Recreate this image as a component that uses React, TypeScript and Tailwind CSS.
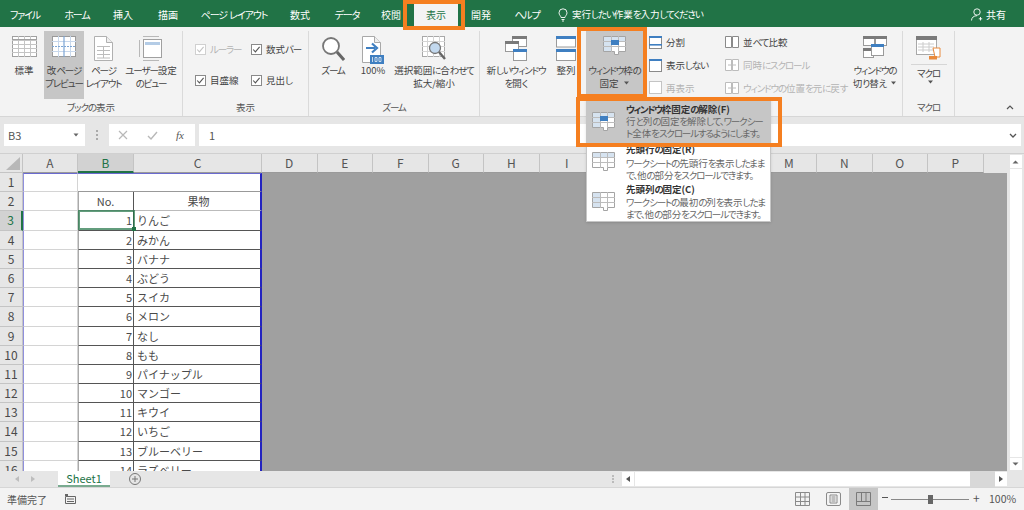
import * as React from "react"

type BtnProps = {
  w: number
  label: string[]
  icon: React.ReactNode
  active?: boolean
  caret?: boolean
}

// Kana are set narrow in the ribbon font, kanji stay full width
const Kana = ({ text, tight }: { text: string; tight?: boolean }) => (
  <>
    {text.split(/([\u3000-\u30ff]+)/).map((part, i) =>
      i % 2 === 1 ? (
        <span key={i} className={tight ? "tracking-[-1.4px]" : "tracking-[-1.1px]"}>
          {part}
        </span>
      ) : (
        part
      )
    )}
  </>
)

const Caret = () => (
  <svg width="7" height="4" viewBox="0 0 7 4" className="inline-block ml-[4px] mb-[2px]">
    <path d="M1 0.5h5L3.5 3.5z" fill="#555" />
  </svg>
)

// Ribbon icons
const GridIcon = () => (
  <svg width="25" height="21" viewBox="0 0 25 21">
    <rect x="0.5" y="0.5" width="24" height="20" fill="#fff" stroke="#a0a0a0" />
    <path d="M0 4.5h25M0 8.5h25M0 12.5h25M0 16.5h25M6.5 0v21M12.5 0v21M18.5 0v21" stroke="#c4c4c4" />
    <path d="M0 3.5h25" stroke="#a0a0a0" />
  </svg>
)

const BreakIcon = () => (
  <svg width="24" height="21" viewBox="0 0 24 21">
    <rect x="0.5" y="0.5" width="23" height="20" fill="#fff" stroke="#9a9a9a" />
    <path d="M0 5.5h24M0 15.5h24M6.5 0v21M18.5 0v21" stroke="#c8d8ec" />
    <path d="M12 0v21" stroke="#7ea6d4" strokeWidth="1.2" />
    <path d="M0 10.5h24" stroke="#7ea6d4" strokeDasharray="2 1" />
  </svg>
)

const PageIcon = () => (
  <svg width="19" height="25" viewBox="0 0 19 25">
    <path d="M0.5 0.5h12l6 6v18h-18z" fill="#fff" stroke="#b0b0b0" />
    <path d="M12.5 0.5v6h6" fill="#eee" stroke="#b0b0b0" />
    <path d="M3 10.5h13M3 14.5h13M3 18.5h13M3 22h13M9.5 10v12" stroke="#bcbcbc" />
  </svg>
)

const CustomViewIcon = () => (
  <svg width="24" height="25" viewBox="0 0 24 25">
    <path d="M0.5 4v17M4 0.5h16M4 24.5h16" stroke="#b8b8b8" />
    <rect x="4.5" y="3.5" width="18" height="18" fill="#fff" stroke="#a0a0a0" />
    <rect x="6" y="6" width="15" height="3" fill="#b4cce6" />
  </svg>
)

const MagnifierIcon = () => (
  <svg width="24" height="27" viewBox="0 0 24 27">
    <circle cx="10" cy="10" r="8" fill="#fff" stroke="#777" strokeWidth="1.8" />
    <path d="M16 16l7 8" stroke="#666" strokeWidth="3" />
  </svg>
)

const HundredIcon = () => (
  <svg width="22" height="28" viewBox="0 0 22 28">
    <path d="M0.5 0.5h12l6 6v20h-18z" fill="#fff" stroke="#a8a8a8" />
    <path d="M12.5 0.5v6h6" fill="#eee" stroke="#a8a8a8" />
    <path d="M4 12h9M10 7.5l5 4.5-5 4.5" fill="none" stroke="#3f7fc1" strokeWidth="2.2" />
    <rect x="8" y="19" width="14" height="9" fill="#3f7fc1" />
    <path d="M10.5 21v5M13 21.5h2v4h-2zM17 21.5h2v4h-2z" fill="none" stroke="#fff" strokeWidth="0.7" />
  </svg>
)

const ZoomSelIcon = () => (
  <svg width="25" height="25" viewBox="0 0 25 25">
    <rect x="0.5" y="0.5" width="22" height="20" fill="#fff" stroke="#a8a8a8" />
    <path d="M0 5.5h23M0 10.5h23M0 15.5h23M5.5 0v21M11.5 0v21M17.5 0v21" stroke="#d4d4d4" />
    <circle cx="13" cy="12" r="5.5" fill="#c2d8ee" stroke="#777" strokeWidth="1.3" />
    <path d="M17 16l6 7" stroke="#666" strokeWidth="2.4" />
  </svg>
)

const NewWinIcon = () => (
  <svg width="22" height="25" viewBox="0 0 22 25">
    <rect x="7.5" y="0.5" width="14" height="10" fill="#fff" stroke="#9a9a9a" />
    <rect x="7" y="0" width="15" height="3" fill="#7a7a7a" />
    <rect x="0.5" y="5.5" width="13" height="10" fill="#fff" stroke="#9a9a9a" />
    <rect x="0" y="5" width="14" height="3" fill="#7a7a7a" />
    <rect x="8.5" y="13.5" width="13" height="11" fill="#fff" stroke="#9a9a9a" />
    <rect x="8" y="13" width="14" height="3" fill="#3f7fc1" />
  </svg>
)

const ArrangeIcon = () => (
  <svg width="20" height="25" viewBox="0 0 20 25">
    <rect x="0.5" y="0.5" width="19" height="10.5" fill="#fff" stroke="#9a9a9a" />
    <rect x="0" y="0" width="20" height="3" fill="#3f7fc1" />
    <rect x="0.5" y="13.5" width="19" height="11" fill="#fff" stroke="#9a9a9a" />
    <rect x="0" y="13" width="20" height="3" fill="#3f7fc1" />
  </svg>
)

const FreezeIcon = ({ hatch = "all" }: { hatch?: "all" | "top" | "left" }) => (
  <svg width="23" height="20" viewBox="0 0 23 20">
    <path d="M0.5 0.5h22v15h-7v3h-4v-3h-11z" fill="#fff" stroke="#a4a4a4" />
    {hatch !== "left" && <rect x="1" y="1" width="21" height="4" fill="#d6e3f0" />}
    {hatch !== "top" && <rect x="1" y="1" width="7" height="14" fill="#d6e3f0" />}
    <path d="M0 5.5h23M0 10.5h23M8.5 0v16M15.5 0v16" stroke="#bcbcbc" />
    {hatch === "all" && <rect x="8" y="4" width="8" height="5" fill="#3f7fc1" />}
  </svg>
)

const SwitchIcon = () => (
  <svg width="24" height="25" viewBox="0 0 24 25">
    <rect x="0.5" y="0.5" width="11" height="9" fill="#fff" stroke="#9a9a9a" />
    <rect x="0" y="0" width="12" height="3" fill="#7a7a7a" />
    <rect x="12.5" y="0.5" width="11" height="9" fill="#fff" stroke="#9a9a9a" />
    <rect x="12" y="0" width="12" height="3" fill="#7a7a7a" />
    <rect x="0.5" y="12.5" width="10" height="9" fill="#fff" stroke="#9a9a9a" />
    <rect x="0" y="12" width="11" height="3" fill="#7a7a7a" />
    <rect x="8.5" y="8.5" width="12" height="11" fill="#fff" stroke="#9a9a9a" />
    <rect x="8" y="8" width="13" height="3" fill="#3f7fc1" />
  </svg>
)

const MacroIcon = () => (
  <svg width="25" height="24" viewBox="0 0 25 24">
    <rect x="0.5" y="0.5" width="20" height="18" fill="#fff" stroke="#a8a8a8" />
    <rect x="0" y="0" width="21" height="4" fill="#7a7a7a" />
    <path d="M2 8h16M2 11h16M2 14h16M7 6v10M13 6v10" stroke="#cccccc" />
    <path d="M17 12h7v9h-5z" fill="#fff" stroke="#e98a3c" />
    <rect x="13" y="20" width="8" height="3.5" fill="#e98a3c" />
  </svg>
)

const SplitIcon = ({ two, muted }: { two?: boolean; muted?: boolean }) => (
  <svg width="13" height="13" viewBox="0 0 13 13">
    <rect x="0.5" y="0.5" width="12" height="12" fill="#fff" stroke={muted ? "#c4c4c4" : "#8a8a8a"} />
    {!muted && <rect x="0" y="0" width="13" height="2" fill="#3f7fc1" />}
    {two && <rect x="0" y="8" width="13" height="1.6" fill="#3f7fc1" />}
  </svg>
)

const CompareIcon = ({ muted }: { muted?: boolean }) => (
  <svg width="14" height="12" viewBox="0 0 14 12">
    <path d="M0.5 0.5h6v11h-6zM7.5 0.5h6v11h-6z" fill="#fff" stroke={muted ? "#bcbcbc" : "#8a8a8a"} />
    {muted && <path d="M3 6h8" stroke="#bcbcbc" />}
  </svg>
)

const Check = ({ disabled }: { disabled?: boolean }) => (
  <svg width="11" height="11" viewBox="0 0 11 11" className="shrink-0">
    <rect x="0.5" y="0.5" width="10" height="10" fill="#fff" stroke={disabled ? "#d0d0d0" : "#8a8a8a"} />
    <path d="M2.2 5.5l2.2 2.4 4.2-5" fill="none" stroke={disabled ? "#c4c4c4" : "#555"} strokeWidth="1.1" />
  </svg>
)

const RibbonButton = ({ w, label, icon, active, caret }: BtnProps) => (
  <div
    style={{ width: w }}
    className={`flex flex-col items-center pt-[5px] h-[68px] shrink-0 ${active ? "bg-[#c6c6c6]" : ""}`}
  >
    <div className="h-[28px] flex items-start justify-center">{icon}</div>
    {label.map((line, i) => (
      <div key={i} className="h-[13px] leading-[13px] whitespace-nowrap">
        <Kana text={line} />
        {caret && i === label.length - 1 && <Caret />}
      </div>
    ))}
  </div>
)

const Group = ({ w, title, children }: { w: number; title: string; children: React.ReactNode }) => (
  <div style={{ width: w }} className="shrink-0 relative flex flex-col border-r border-[#dadada]">
    <div className="h-[68px] flex">{children}</div>
    <div className="h-[16px] leading-[16px] text-center text-[#555]">
      <Kana text={title} />
    </div>
  </div>
)

const SmallItem = ({ icon, text, muted }: { icon: React.ReactNode; text: string; muted?: boolean }) => (
  <div className={`h-[23px] flex items-center gap-[4px] whitespace-nowrap ${muted ? "text-[#b4b4b4]" : ""}`}>
    {icon}
    <span>
      <Kana text={text} />
    </span>
  </div>
)

const CheckItem = ({ text, disabled, w }: { text: string; disabled?: boolean; w: number }) => (
  <div style={{ width: w }} className={`h-[20px] flex items-center gap-[4px] whitespace-nowrap ${disabled ? "text-[#b4b4b4]" : ""}`}>
    <Check disabled={disabled} />
    <span>
      <Kana text={text} />
    </span>
  </div>
)

const tabs: { label: string; w: number; active?: boolean }[] = [
  { label: "ファイル", w: 50 },
  { label: "ホーム", w: 54 },
  { label: "挿入", w: 38 },
  { label: "描画", w: 52 },
  { label: "ページ レイアウト", w: 80 },
  { label: "数式", w: 52 },
  { label: "データ", w: 42 },
  { label: "校閲", w: 46 },
  { label: "表示", w: 44, active: true },
  { label: "開発", w: 46 },
  { label: "ヘルプ", w: 46 },
]

const TabBar = () => (
  <div className="h-[27px] bg-[#217346] flex items-end text-white shrink-0 text-[10px]">
    {tabs.map((t) => (
      <div
        key={t.label}
        style={{ width: t.w }}
        className={`text-center whitespace-nowrap h-[23px] leading-[21px] ${t.active ? "bg-[#f3f3f3] text-[#217346]" : ""}`}
      >
        <Kana text={t.label} />
      </div>
    ))}
    <div className="h-[23px] ml-[8px] flex items-center gap-[4px] pb-[2px] text-[9.5px]">
      <svg width="10" height="14" viewBox="0 0 10 14" fill="none" stroke="#fff" strokeWidth="0.9">
        <path d="M3 9.5C3 8 1 7 1 4.8a4 4 0 018 0C9 7 7 8 7 9.5zM3.5 11.5h3M4 13h2" />
      </svg>
      <span className="whitespace-nowrap">
        <Kana text="実行したい作業を入力してください" />
      </span>
    </div>
    <div className="flex-1" />
    <div className="h-[23px] flex items-center gap-[3px] pb-[2px] mr-[18px]">
      <svg width="12" height="13" viewBox="0 0 12 13" fill="none" stroke="#fff" strokeWidth="0.9">
        <circle cx="6" cy="4" r="3.2" />
        <path d="M0.5 12.5c0-3 2.4-4.8 5.5-4.8M9.5 9v3.5M7.8 10.8h3.4" />
      </svg>
      <span>共有</span>
    </div>
  </div>
)

const Ribbon = () => (
  <div className="h-[90px] bg-[#f3f3f3] border-b border-[#d6d6d6] shrink-0 flex pt-[4px] text-[#444] text-[9.5px]">
    <Group w={183} title="ブックの表示">
      <div className="w-[4px]" />
      <RibbonButton w={40} label={["標準"]} icon={<GridIcon />} />
      <RibbonButton w={40} label={["改ページ", "プレビュー"]} icon={<BreakIcon />} active />
      <RibbonButton w={39} label={["ページ", "レイアウト"]} icon={<PageIcon />} />
      <RibbonButton w={56} label={["ユーザー設定", "のビュー"]} icon={<CustomViewIcon />} />
    </Group>
    <Group w={126} title="表示">
      <div className="pl-[12px] pt-[8px] flex flex-col gap-[11px]">
        <div className="flex">
          <CheckItem w={56} text="ルーラー" disabled />
          <CheckItem w={56} text="数式バー" />
        </div>
        <div className="flex">
          <CheckItem w={56} text="目盛線" />
          <CheckItem w={56} text="見出し" />
        </div>
      </div>
    </Group>
    <Group w={171} title="ズーム">
      <div className="w-[3px]" />
      <RibbonButton w={42} label={["ズーム"]} icon={<MagnifierIcon />} />
      <RibbonButton w={38} label={["100%"]} icon={<HundredIcon />} />
      <RibbonButton w={84} label={["選択範囲に合わせて", "拡大/縮小"]} icon={<ZoomSelIcon />} />
    </Group>
    <Group w={423} title="">
      <div className="w-[6px]" />
      <RibbonButton w={60} label={["新しいウィンドウ", "を開く"]} icon={<NewWinIcon />} />
      <div className="w-[5px]" />
      <RibbonButton w={30} label={["整列"]} icon={<ArrangeIcon />} />
      <div className="w-[5px]" />
      <RibbonButton w={57} label={["ウィンドウ枠の", "固定"]} icon={<FreezeIcon />} active caret />
      <div className="w-[5px]" />
      <div className="w-[77px] flex flex-col shrink-0 pl-[1px]">
        <SmallItem icon={<SplitIcon two />} text="分割" />
        <SmallItem icon={<SplitIcon />} text="表示しない" />
        <SmallItem icon={<SplitIcon muted />} text="再表示" muted />
      </div>
      <div className="w-[125px] flex flex-col shrink-0">
        <SmallItem icon={<CompareIcon />} text="並べて比較" />
        <SmallItem icon={<CompareIcon muted />} text="同時にスクロール" muted />
        <SmallItem icon={<CompareIcon muted />} text="ウィンドウの位置を元に戻す" muted />
      </div>
      <RibbonButton w={50} label={["ウィンドウの", "切り替え"]} icon={<SwitchIcon />} caret />
    </Group>
    <Group w={52} title="マクロ">
      <div className="w-full flex flex-col items-center pt-[5px]">
        <div className="h-[28px]">
          <MacroIcon />
        </div>
        <div className="w-[36px] border-t border-[#d6d6d6] h-[1px]" />
        <div className="h-[14px] leading-[14px] mt-[1px]">
          <Kana text="マクロ" />
        </div>
        <Caret />
      </div>
    </Group>
    <div className="flex-1 flex items-end justify-end pr-[10px] pb-[6px]">
      <svg width="8" height="5" viewBox="0 0 8 5" fill="none" stroke="#555" strokeWidth="1.2">
        <path d="M1 4l3-3 3 3" />
      </svg>
    </div>
  </div>
)

const FormulaBar = () => (
  <div className="h-[37px] bg-[#e6e6e6] shrink-0 flex items-start pt-[7px] text-[#555] border-b border-[#d0d0d0]">
    <div className="ml-[4px] w-[81px] h-[22px] bg-white flex items-center justify-between pl-[4px] pr-[6px] text-[11px]">
      <span>B3</span>
      <svg width="6" height="4" viewBox="0 0 6 4">
        <path d="M0.5 0.5h5L3 3.5z" fill="#666" />
      </svg>
    </div>
    <div className="w-[24px] h-[22px] flex flex-col items-center justify-center gap-[2px]">
      <div className="w-[2px] h-[2px] bg-[#aaa]" />
      <div className="w-[2px] h-[2px] bg-[#aaa]" />
      <div className="w-[2px] h-[2px] bg-[#aaa]" />
    </div>
    <div className="w-[86px] h-[22px] bg-white flex items-center">
      <svg width="10" height="10" viewBox="0 0 10 10" fill="none" stroke="#b8b8b8" strokeWidth="1.2" className="ml-[9px]">
        <path d="M1 1l8 8M9 1l-8 8" />
      </svg>
      <svg width="11" height="9" viewBox="0 0 11 9" fill="none" stroke="#b8b8b8" strokeWidth="1.4" className="ml-[19px]">
        <path d="M1 5l3 3 6-7" />
      </svg>
      <span className="ml-[18px] italic text-[11px] text-[#555] [font-family:'Liberation_Serif',serif]">fx</span>
    </div>
    <div className="ml-[4px] w-[822px] h-[22px] bg-white flex items-center pl-[10px] pr-[4px] justify-between text-[11px]">
      <span>1</span>
      <svg width="8" height="5" viewBox="0 0 8 5" fill="none" stroke="#555" strokeWidth="1.3">
        <path d="M1 1l3 3 3-3" />
      </svg>
    </div>
  </div>
)

const colsRest = ["D", "E", "F", "G", "H", "I", "J", "K", "L", "M", "N", "O", "P"]
const fruits = [
  "りんご", "みかん", "バナナ", "ぶどう", "スイカ", "メロン", "なし", "もも",
  "パイナップル", "マンゴー", "キウイ", "いちご", "ブルーベリー", "ラズベリー",
]

const HeaderCell = ({ w, label, active }: { w: number; label?: string; active?: boolean }) => (
  <div
    style={{ width: w }}
    className={`shrink-0 h-full text-center leading-[18px] text-[12px] border-r border-[#c4c4c4] ${
      active ? "bg-[#d2d2d2] text-[#217346] border-b-2 border-b-[#217346]" : "border-b border-b-[#9a9a9a] text-[#555]"
    }`}
  >
    {label}
  </div>
)

const Row = ({ n, b, c, bClass, cClass, selected, head }: {
  n: number
  b?: React.ReactNode
  c?: React.ReactNode
  bClass: string
  cClass: string
  selected?: boolean
  head?: boolean
}) => (
  <div className="flex h-[19.2px] shrink-0 text-[11px] text-[#4a4a4a] [font-feature-settings:normal]">
    <div
      className={`w-[23px] shrink-0 text-center leading-[18px] text-[12px] border-b border-r ${
        selected ? "bg-[#d2d2d2] text-[#217346] border-[#c4c4c4] border-r-2 border-r-[#217346]" : "bg-[#e6e6e6] border-[#c4c4c4]"
      }`}
    >
      {n}
    </div>
    <div className={`w-[55px] shrink-0 bg-white border-l border-l-[#8f8fdc] border-r border-r-[#d4d4d4] border-b border-b-[#d4d4d4] ${n === 1 ? "border-t border-t-[#6a6ad0]" : ""}`} />
    <div className={`relative w-[56px] shrink-0 bg-white pr-[1px] leading-[18px] ${head ? "text-center" : "text-right"} ${bClass}`}>
      {b}
      {selected && (
        <div className="absolute left-[-1px] top-[-1px] w-[57px] h-[20px] border-2 border-[#217346]/70">
          <div className="absolute right-[-3px] bottom-[-3px] w-[4px] h-[4px] bg-[#217346]" />
        </div>
      )}
    </div>
    <div className={`w-[128px] shrink-0 bg-white pl-[3px] leading-[18px] border-r-2 border-r-[#2323c0] ${head ? "text-center" : ""} ${cClass}`}>{c}</div>
  </div>
)

const Sheet = () => (
  <div className="flex-1 min-h-0 flex">
    <div className="flex-1 min-w-0 flex flex-col">
      <div className="h-[19px] flex bg-[#e6e6e6] shrink-0">
        <div className="w-[23px] shrink-0 h-full border-r border-b border-[#c4c4c4] flex items-end justify-end p-[2px]">
          <svg width="14" height="13" viewBox="0 0 14 13">
            <path d="M14 0v13H0z" fill="#b8b8b8" />
          </svg>
        </div>
        <HeaderCell w={55} label="A" />
        <HeaderCell w={56} label="B" active />
        <HeaderCell w={128} label="C" />
        {colsRest.map((l) => (
          <HeaderCell key={l} w={55.5} label={l} />
        ))}
      </div>
      <div className="flex-1 min-h-0 flex overflow-hidden">
        <div className="w-[262px] shrink-0 flex flex-col">
          <Row n={1} bClass="border-t border-t-[#6a6ad0] border-b border-b-[#999]" cClass="border-t border-t-[#6a6ad0] border-b border-b-[#999]" />
          <Row
            n={2}
            head
            b="No."
            c="果物"
            bClass="border-l border-l-[#aaa] border-r border-r-[#555] border-b border-b-[#bbb]"
            cClass="border-b border-b-[#bbb]"
          />
          {fruits.map((f, i) => (
            <Row
              key={f}
              n={i + 3}
              b={i + 1}
              c={f}
              selected={i === 0}
              bClass="border-l border-l-[#aaa] border-r border-r-[#555] border-b border-b-[#555]"
              cClass="border-b border-b-[#555]"
            />
          ))}
        </div>
        <div className="flex-1 bg-[#a0a0a0]" />
      </div>
    </div>
    <div className="w-[17px] shrink-0 bg-[#e6e6e6] flex flex-col items-center pt-[1px] pb-[1px]">
      <div className="w-[12px] h-[13px] bg-white flex items-center justify-center">
        <svg width="7" height="4" viewBox="0 0 7 4">
          <path d="M0.5 3.5h6L3.5 0.5z" fill="#666" />
        </svg>
      </div>
      <div className="w-[12px] flex-1 bg-white mt-[1px] mb-[1px]" />
      <div className="w-[12px] h-[12px] bg-white flex items-center justify-center">
        <svg width="7" height="4" viewBox="0 0 7 4">
          <path d="M0.5 0.5h6L3.5 3.5z" fill="#666" />
        </svg>
      </div>
    </div>
  </div>
)

const SheetTabs = () => (
  <div className="h-[16px] bg-[#e6e6e6] shrink-0 flex items-stretch">
    <div className="w-[58px] flex items-center pl-[15px] gap-[12px] shrink-0">
      <svg width="4" height="6" viewBox="0 0 4 6"><path d="M4 0v6L0 3z" fill="#bdbdbd" /></svg>
      <svg width="4" height="6" viewBox="0 0 4 6"><path d="M0 0v6l4-3z" fill="#bdbdbd" /></svg>
    </div>
    <div className="w-[52px] bg-white text-[#217346] text-[11px] leading-[14px] text-center border-b-2 border-b-[#217346]/60 shrink-0">Sheet1</div>
    <div className="w-[50px] flex items-center justify-center shrink-0">
      <svg width="12" height="12" viewBox="0 0 12 12" fill="none" stroke="#777">
        <circle cx="6" cy="6" r="5.5" />
        <path d="M3 6h6M6 3v6" />
      </svg>
    </div>
    <div className="w-[462px] flex flex-col items-end justify-center gap-[1px] pr-[8px] shrink-0">
      <div className="w-[2px] h-[2px] bg-[#bbb]" />
      <div className="w-[2px] h-[2px] bg-[#bbb]" />
      <div className="w-[2px] h-[2px] bg-[#bbb]" />
    </div>
    <div className="w-[12px] bg-white flex items-center justify-center shrink-0 my-[1px]">
      <svg width="4" height="6" viewBox="0 0 4 6"><path d="M4 0v6L0 3z" fill="#555" /></svg>
    </div>
    <div className="w-[335px] bg-white ml-[1px] shrink-0 my-[1px]" />
    <div className="w-[25px] bg-[#d8d8d8] shrink-0" />
    <div className="w-[12px] bg-white flex items-center justify-center shrink-0 my-[1px]">
      <svg width="4" height="6" viewBox="0 0 4 6"><path d="M0 0v6l4-3z" fill="#555" /></svg>
    </div>
  </div>
)

const StatusBar = () => (
  <div className="h-[23px] bg-[#f3f3f3] border-t border-[#d6d6d6] shrink-0 flex items-center text-[#555] text-[10px]">
    <span className="ml-[7px] w-[58px]">準備完了</span>
    <svg width="11" height="10" viewBox="0 0 11 10" fill="none" stroke="#666">
      <path d="M0.5 2.5h10v7h-10zM2 5h7M2 7.5h7" />
      <rect x="0" y="0" width="3" height="2" fill="#666" stroke="none" />
    </svg>
    <div className="flex-1" />
    <svg width="15" height="14" viewBox="0 0 15 14" fill="none" stroke="#8a8a8a">
      <path d="M0.5 0.5h14v13h-14zM5.5 0v14M10 0v14M0 5h15M0 9.5h15" />
    </svg>
    <svg width="15" height="14" viewBox="0 0 15 14" fill="none" stroke="#8a8a8a" className="ml-[16px]">
      <rect x="0.5" y="0.5" width="14" height="13" rx="1.5" />
      <path d="M4 3h7v8H4zM5.5 5h4M5.5 7h4M5.5 9h4" />
    </svg>
    <div className="ml-[8px] w-[29px] h-full bg-[#c6c6c6] flex items-center justify-center">
      <svg width="15" height="14" viewBox="0 0 15 14" fill="none" stroke="#7a7a7a">
        <path d="M0.5 0.5h14v13h-14zM5.5 0v9M10 0v9M0 9.5h15" />
      </svg>
    </div>
    <div className="ml-[4px] w-[6px] h-[1px] bg-[#555] mb-[3px]" />
    <div className="ml-[3px] relative w-[78px] h-[1px] bg-[#888]">
      <div className="absolute left-[37px] top-[-4px] w-[5px] h-[9px] bg-[#666]" />
    </div>
    <span className="ml-[4px] w-[7px] text-[12px] leading-none mb-[3px]">+</span>
    <span className="ml-[9px] mr-[8px] text-[10.5px] w-[27px]">100%</span>
  </div>
)

const MenuItem = ({ hatch, title, lines, className, gap, active }: {
  hatch: "all" | "top" | "left"
  title: string
  lines: string[]
  className: string
  gap: string
  active?: boolean
}) => (
  <div className={`flex ${className} ${active ? "bg-[#c6c6c6]" : ""}`}>
    <div className="w-[39px] shrink-0 pl-[5px] pt-[9px]">
      <FreezeIcon hatch={hatch} />
    </div>
    <div className="min-w-0">
      <div className="font-bold text-[#333] leading-[12px] whitespace-nowrap">
        <Kana text={title} tight />
      </div>
      <div className={`${gap} text-[#666]`}>
        {lines.map((l) => (
          <div key={l} className="leading-[12px] whitespace-nowrap">
            <Kana text={l} />
          </div>
        ))}
      </div>
    </div>
  </div>
)

// Dropdown opened from the freeze panes button
const FreezeMenu = () => (
  <div className="absolute left-[586px] top-[98px] w-[185px] h-[124px] bg-white border border-[#c6c6c6] shadow-sm text-[9.5px] flex flex-col">
    <MenuItem
      active
      hatch="all"
      className="h-[44px] pt-[4px]"
      gap="mt-[0px]"
      title="ウィンドウ枠固定の解除(F)"
      lines={["行と列の固定を解除して、ワークシー", "ト全体をスクロールするようにします。"]}
    />
    <MenuItem
      hatch="top"
      className="h-[40px]"
      gap="mt-[2px]"
      title="先頭行の固定(R)"
      lines={["ワークシートの先頭行を表示したまま", "で、他の部分をスクロールできます。"]}
    />
    <MenuItem
      hatch="left"
      className="h-[38px]"
      gap="mt-[1px]"
      title="先頭列の固定(C)"
      lines={["ワークシートの最初の列を表示したま", "まで、他の部分をスクロールできます。"]}
    />
  </div>
)

const App = () => (
  <div className="relative w-[1024px] h-[510px] overflow-hidden flex flex-col bg-white [font-family:'Noto_Sans_CJK_JP','Liberation_Sans',sans-serif] [font-feature-settings:'palt']">
    <TabBar />
    <Ribbon />
    <FormulaBar />
    <Sheet />
    <SheetTabs />
    <StatusBar />
    <FreezeMenu />
    {/* orange callouts drawn over the screenshot */}
    <div className="absolute left-[403px] top-0 w-[62px] h-[30px] border-[4px] border-[#f57f20]" />
    <div className="absolute left-[577px] top-[27px] w-[70px] h-[71px] border-[4px] border-[#f57f20]" />
    <div className="absolute left-[576px] top-[97px] w-[206px] h-[50px] border-[4px] border-[#f57f20]" />
  </div>
)

export default App
